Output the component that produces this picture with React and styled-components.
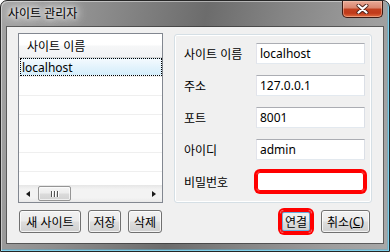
import React from 'react';
import styled, { createGlobalStyle } from 'styled-components';

const Global = createGlobalStyle`
  html, body { margin: 0; padding: 0; background: #fff; }
  body { width: 390px; height: 252px; overflow: hidden; }
  * { box-sizing: border-box; }
`;

const FONT = `"Noto Sans", "Noto Sans CJK KR", sans-serif`;

const Window = styled.div`
  width: 390px;
  height: 252px;
  display: flex;
  flex-direction: column;
  padding: 0 6px 8px 6px;
  border: 1px solid #262626;
  border-radius: 7px 7px 0 0;
  background: linear-gradient(100deg, #a4a4a4 0%, #8e8e8e 22%, #6c6c6c 48%, #858585 66%, #9d9d9d 86%, #a8a8a8 100%);
  box-shadow: inset 1px 1px 0 rgba(255, 255, 255, 0.45), inset -1px -1px 0 #7fd0ea, inset -2px -2px 0 rgba(90, 170, 200, 0.5);
  font-family: ${FONT};
  font-size: 12px;
  color: #000;
`;

const TitleBar = styled.div`
  height: 26px;
  flex: none;
  display: flex;
  align-items: center;
`;

const TitleText = styled.div`
  font-size: 12px;
  line-height: 16px;
  padding-left: 1px;
  color: #000;
  text-shadow: 0 0 4px #fff, 0 0 8px #fff, 0 0 12px rgba(255, 255, 255, 0.9), 0 0 16px rgba(255, 255, 255, 0.7);
`;

const CloseButton = styled.div`
  margin-left: auto;
  align-self: flex-start;
  width: 41px;
  height: 17px;
  border: 1px solid #3b1a14;
  border-top: none;
  border-radius: 0 0 5px 5px;
  background: linear-gradient(#e9a996 0%, #da8770 42%, #c2401f 52%, #c03a1a 76%, #e06c40 100%);
  box-shadow: inset 0 0 0 1px rgba(255, 215, 195, 0.45);
  display: flex;
  align-items: center;
  justify-content: center;
`;

const Client = styled.div`
  flex: 1;
  background: #f0f0f0;
  box-shadow: 0 0 0 1px rgba(35, 35, 35, 0.55);
  display: grid;
  grid-template-columns: 145px 198px;
  grid-template-rows: 170px 23px;
  column-gap: 11px;
  row-gap: 7px;
  padding: 6px 0 0 11px;
  align-content: start;
`;

const ListBox = styled.div`
  border: 1px solid #828790;
  background: #fff;
  display: flex;
  flex-direction: column;
  overflow: hidden;
`;

const ListHeader = styled.div`
  height: 24px;
  flex: none;
  display: flex;
  align-items: center;
  padding-left: 8px;
  background: linear-gradient(#ffffff 0%, #ffffff 45%, #f5f6f7 55%, #f1f2f4 100%);
  border-bottom: 1px solid #d5d5d5;
`;

const Rows = styled.div`
  flex: 1;
  overflow: hidden;
`;

const Row = styled.div`
  height: 19px;
  border-bottom: 1px solid #efefef;
  padding: ${(p) => (p.$selected ? '0 0 0 1px' : '0')};
  display: flex;
`;

const Selection = styled.div`
  flex: 1;
  display: flex;
  align-items: center;
  padding-left: 1px;
  border: 1px dotted #000;
  background: linear-gradient(#f4fafe 0%, #e3f3fc 50%, #d4edfb 100%);
`;

const ScrollBar = styled.div`
  height: 17px;
  flex: none;
  display: flex;
  background: linear-gradient(#e6e6e6 0%, #f3f3f3 25%, #f3f3f3 75%, #e9e9e9 100%);
`;

const ArrowButton = styled.div`
  width: 17px;
  flex: none;
  display: flex;
  align-items: center;
  justify-content: center;
`;

const Triangle = styled.div`
  width: 0;
  height: 0;
  border-top: 3.5px solid transparent;
  border-bottom: 3.5px solid transparent;
  ${(p) => (p.$dir === 'left' ? 'border-right: 4px solid #1a1a1a;' : 'border-left: 4px solid #1a1a1a;')}
`;

const Track = styled.div`
  flex: 1;
  display: flex;
  align-items: center;
`;

const Thumb = styled.div`
  width: 33px;
  height: 15px;
  margin-left: 2px;
  border: 1px solid #959595;
  border-radius: 2px;
  background: linear-gradient(#f5f5f5 0%, #ececec 48%, #dcdcdc 52%, #d2d2d2 100%);
  box-shadow: inset 0 0 0 1px rgba(255, 255, 255, 0.65);
  display: flex;
  align-items: center;
  justify-content: center;
  gap: 2px;
`;

const Grip = styled.div`
  width: 1px;
  height: 6px;
  background: #555;
  box-shadow: 1px 0 0 #fff;
`;

const ButtonRow = styled.div`
  display: flex;
  gap: ${(p) => p.$gap || 7}px;
  justify-content: ${(p) => (p.$end ? 'flex-end' : 'flex-start')};
  padding: ${(p) => (p.$end ? '0 2px 0 0' : '0 0 0 1px')};
`;

const Button = styled.div`
  width: ${(p) => p.$w}px;
  height: 23px;
  flex: none;
  display: flex;
  align-items: center;
  justify-content: center;
  font-size: 12px;
  border: 1px solid ${(p) => (p.$ring ? '#f00' : '#707070')};
  border-radius: ${(p) => (p.$ring ? '4px' : '3px')};
  background: linear-gradient(#f2f2f2 0%, #ebebeb 48%, #dddddd 52%, #cfcfcf 100%);
  box-shadow: ${(p) =>
    p.$ring
      ? '0 0 0 2px #f00, inset 0 0 0 1px #f00, inset 0 0 0 2px #6aaedc'
      : 'inset 0 0 0 1px rgba(255,255,255,0.75)'};
`;

const Mnemonic = styled.span`
  text-decoration: underline;
`;

const GroupBox = styled.div`
  margin-top: 1px;
  border: 1px solid #d5dfe5;
  border-radius: 3px;
  box-shadow: inset 0 0 0 1px #fff;
  padding: 8px 6px 0 9px;
  display: grid;
  grid-template-columns: 72px 1fr;
  grid-auto-rows: 21px;
  row-gap: 11px;
  align-content: start;
`;

const Label = styled.div`
  display: flex;
  align-items: center;
  font-size: 12px;
`;

const TextBox = styled.input`
  width: 100%;
  height: 21px;
  margin: 0;
  padding: 0 3px;
  font-family: ${FONT};
  font-size: 12px;
  color: #000;
  background: #fff;
  outline: none;
  border: 1px solid;
  border-color: ${(p) => (p.$ring ? '#f00' : '#abadb3 #dbdfe6 #e3e9ef #e2e3ea')};
  border-radius: ${(p) => (p.$ring ? '4px' : '0')};
  box-shadow: ${(p) => (p.$ring ? '0 0 0 2px #f00, inset 0 0 0 1px #f00' : 'none')};
`;

const fields = [
  { label: '사이트 이름', value: 'localhost' },
  { label: '주소', value: '127.0.0.1' },
  { label: '포트', value: '8001' },
  { label: '아이디', value: 'admin' },
  { label: '비밀번호', value: '', ring: true, type: 'password' },
];

function CloseIcon() {
  return (
    <svg width="13" height="10" viewBox="0 0 13 10">
      <path d="M2.5 1.5 L10.5 8.5 M10.5 1.5 L2.5 8.5" stroke="#4a2018" strokeWidth="4" strokeLinecap="round" />
      <path d="M2.5 1.5 L10.5 8.5 M10.5 1.5 L2.5 8.5" stroke="#fff" strokeWidth="2.3" strokeLinecap="round" />
    </svg>
  );
}

export default function App() {
  return (
    <>
      <Global />
      <Window>
        <TitleBar>
          <TitleText>사이트 관리자</TitleText>
          <CloseButton>
            <CloseIcon />
          </CloseButton>
        </TitleBar>
        <Client>
          <ListBox>
            <ListHeader>사이트 이름</ListHeader>
            <Rows>
              <Row $selected>
                <Selection>localhost</Selection>
              </Row>
              {[0, 1, 2, 3, 4, 5].map((i) => (
                <Row key={i} />
              ))}
            </Rows>
            <ScrollBar>
              <ArrowButton>
                <Triangle $dir="left" />
              </ArrowButton>
              <Track>
                <Thumb>
                  <Grip />
                  <Grip />
                  <Grip />
                </Thumb>
              </Track>
              <ArrowButton>
                <Triangle $dir="right" />
              </ArrowButton>
            </ScrollBar>
          </ListBox>
          <GroupBox>
            {fields.map((f) => (
              <React.Fragment key={f.label}>
                <Label>{f.label}</Label>
                <TextBox type={f.type || 'text'} readOnly defaultValue={f.value} $ring={f.ring} />
              </React.Fragment>
            ))}
          </GroupBox>
          <ButtonRow>
            <Button $w={62}>새 사이트</Button>
            <Button $w={33}>저장</Button>
            <Button $w={34}>삭제</Button>
          </ButtonRow>
          <ButtonRow $end $gap={9}>
            <Button $w={32} $ring>연결</Button>
            <Button $w={49}>
              취소(<Mnemonic>C</Mnemonic>)
            </Button>
          </ButtonRow>
        </Client>
      </Window>
    </>
  );
}
